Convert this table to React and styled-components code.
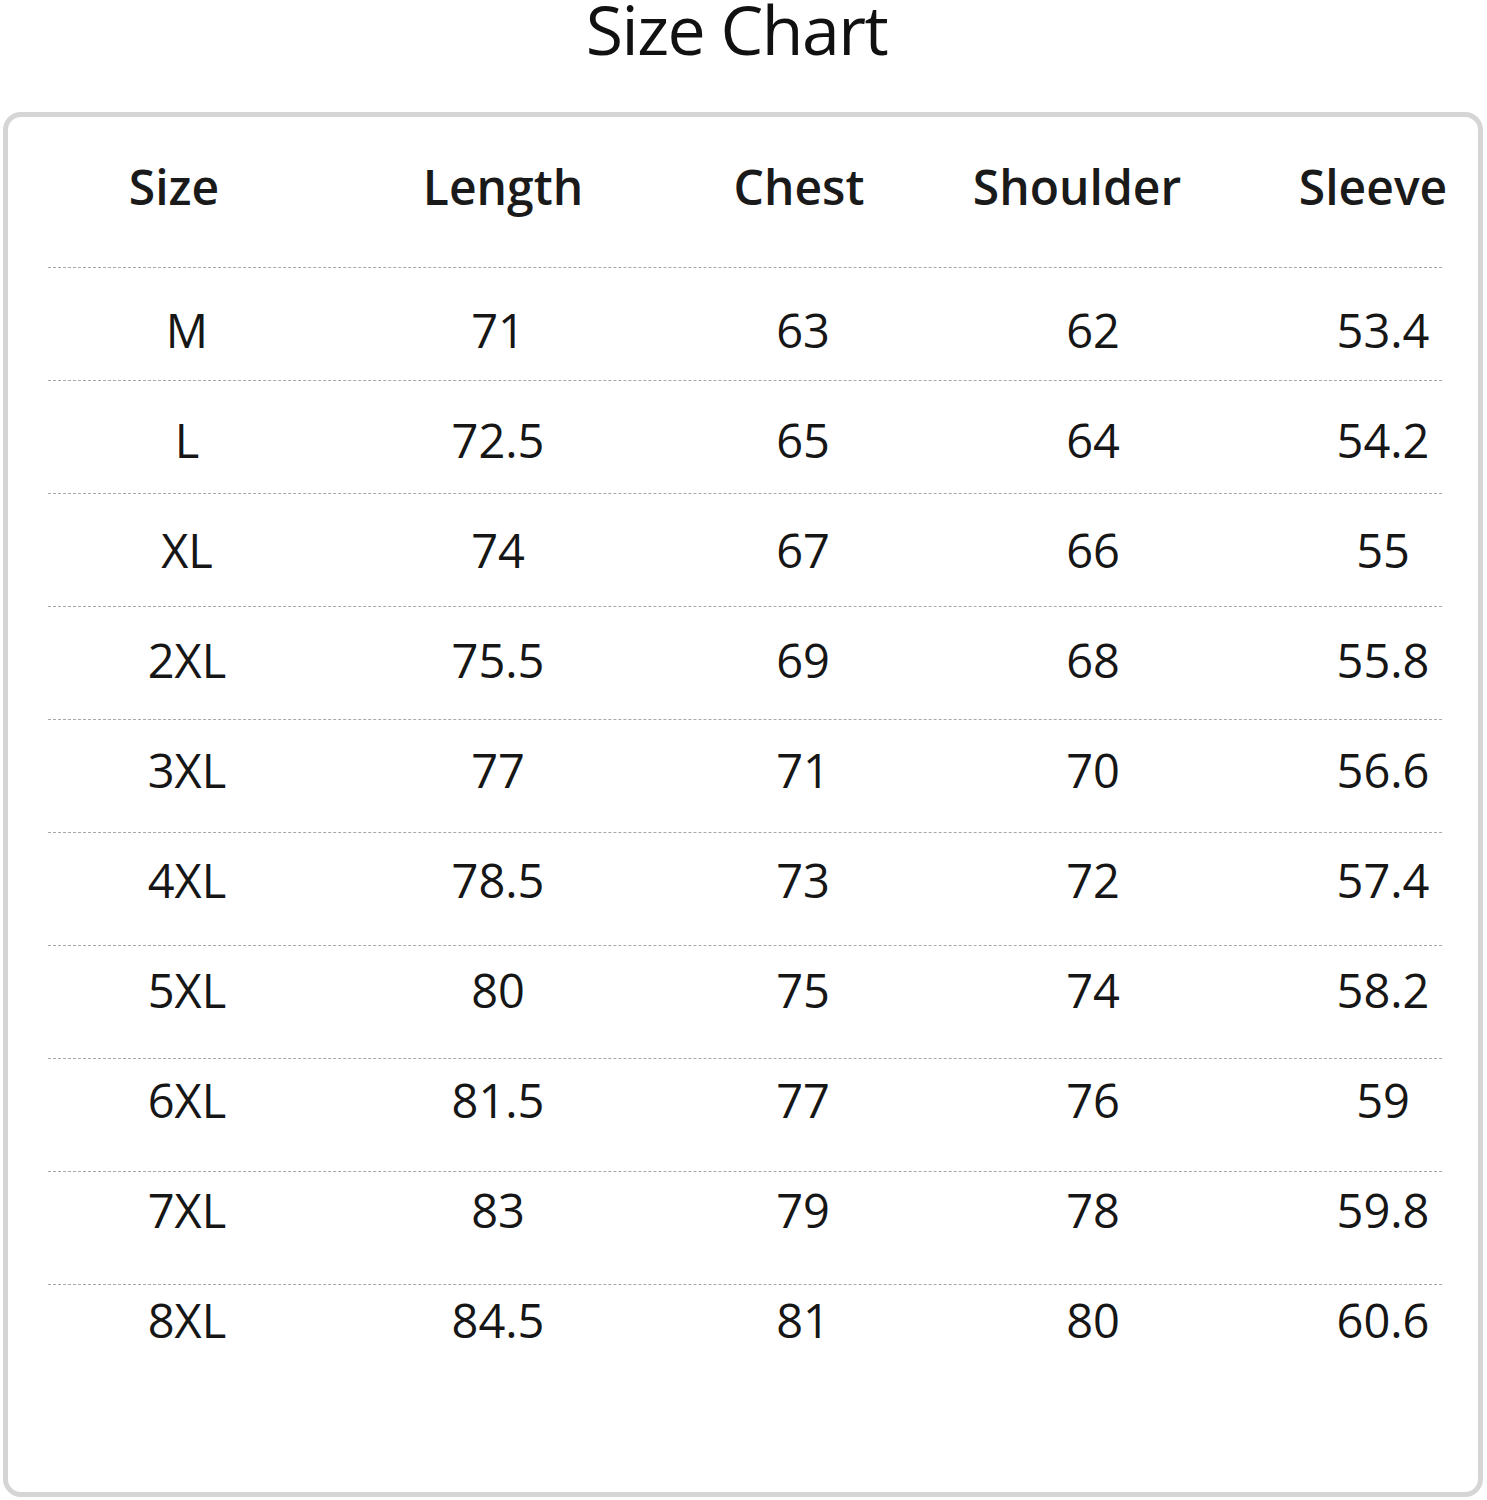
import styled, { createGlobalStyle } from "styled-components";

const GlobalStyle = createGlobalStyle`
  html, body {
    margin: 0;
    padding: 0;
    background: #ffffff;
  }
  body {
    font-family: "Open Sans", "Noto Sans", sans-serif;
    color: #111111;
  }
`;

// column widths and the padding that puts each label where it sits
const columns = [
  { width: 278, head: [0, 26], cell: [0, 0] },
  { width: 344, head: [10, 0], cell: [0, 0] },
  { width: 266, head: [0, 8], cell: [0, 0] },
  { width: 314, head: [0, 32], cell: [0, 0] },
  { width: 192, head: [54, 0], cell: [74, 0] },
];

const headers = ["Size", "Length", "Chest", "Shoulder", "Sleeve"];

const rows = [
  ["M", "71", "63", "62", "53.4"],
  ["L", "72.5", "65", "64", "54.2"],
  ["XL", "74", "67", "66", "55"],
  ["2XL", "75.5", "69", "68", "55.8"],
  ["3XL", "77", "71", "70", "56.6"],
  ["4XL", "78.5", "73", "72", "57.4"],
  ["5XL", "80", "75", "74", "58.2"],
  ["6XL", "81.5", "77", "76", "59"],
  ["7XL", "83", "79", "78", "59.8"],
  ["8XL", "84.5", "81", "80", "60.6"],
];

const App = () => {
  return (
    <Page>
      <GlobalStyle />
      <Title>Size Chart</Title>
      <Card>
        <Table>
          <HeadRow>
            {headers.map((h, i) => (
              <HeadCell key={h} $pad={columns[i].head}>
                {h}
              </HeadCell>
            ))}
          </HeadRow>
          {rows.map((row, r) => (
            // the printed values creep up a little on each row
            <Row key={row[0]} $last={r === rows.length - 1} $top={32 - 3 * r}>
              {row.map((v, i) => (
                <Cell key={i} $pad={columns[i].cell}>
                  {v}
                </Cell>
              ))}
            </Row>
          ))}
        </Table>
      </Card>
    </Page>
  );
};

const Page = styled.div`
  width: 1487px;
  display: flex;
  flex-direction: column;
`;

const Title = styled.h1`
  margin: 0 14px 54px 0;
  height: 58px;
  line-height: 58px;
  text-align: center;
  font-size: 68px;
  font-weight: 400;
  letter-spacing: -1.5px;
  color: #111111;
`;

const Card = styled.div`
  margin: 0 4px 3px 3px;
  height: 1385px;
  box-sizing: border-box;
  border: 5px solid #d5d5d5;
  border-radius: 18px;
  padding: 0 36px 0 40px;
`;

const Table = styled.div`
  display: flex;
  flex-direction: column;
`;

const gridCols = columns.map((c) => `${c.width}px`).join(" ");

const HeadRow = styled.div`
  display: grid;
  grid-template-columns: ${gridCols};
  height: 151px;
  box-sizing: border-box;
  padding-top: 40px;
  border-bottom: 1px dashed #a8a8a8;
`;

const HeadCell = styled.div`
  display: flex;
  justify-content: center;
  white-space: nowrap;
  padding-left: ${(p) => p.$pad[0]}px;
  padding-right: ${(p) => p.$pad[1]}px;
  font-size: 48px;
  font-weight: 600;
  line-height: 60px;
  color: #1a1a1a;
`;

const Row = styled.div`
  display: grid;
  grid-template-columns: ${gridCols};
  align-items: start;
  height: 113px;
  box-sizing: border-box;
  padding-top: ${(p) => p.$top}px;
  border-bottom: ${(p) => (p.$last ? "none" : "1px dashed #a8a8a8")};
`;

const Cell = styled.div`
  display: flex;
  justify-content: center;
  white-space: nowrap;
  padding-left: ${(p) => p.$pad[0]}px;
  padding-right: ${(p) => p.$pad[1]}px;
  font-size: 47px;
  font-weight: 400;
  line-height: 60px;
  color: #161616;
`;

export default App;
